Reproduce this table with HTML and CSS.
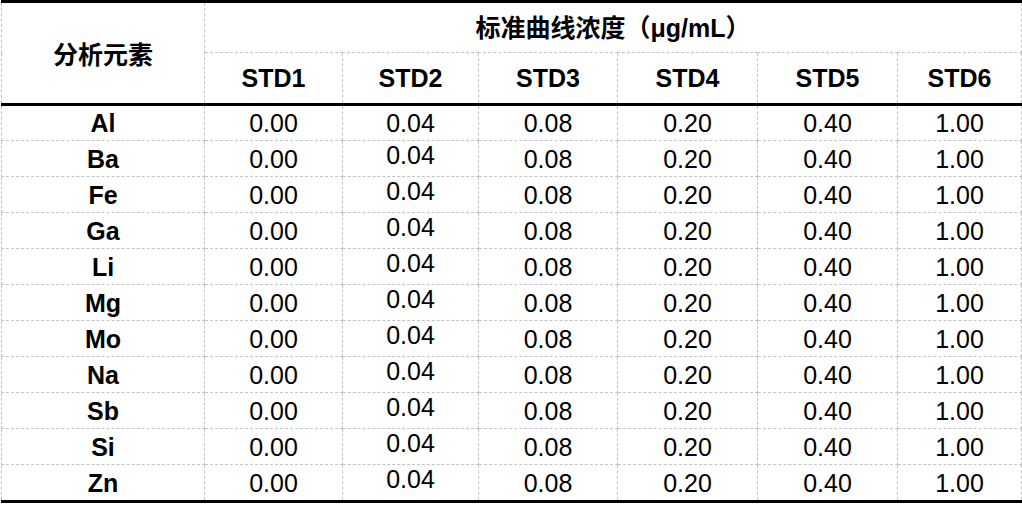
FILE: index.html
```html
<!DOCTYPE html>
<html lang="zh">
<head>
<meta charset="utf-8">
<link rel="stylesheet" href="styles.css">
</head>
<body>
<table class="grid">
  <colgroup>
    <col class="c-el">
    <col class="c1"><col class="c2"><col class="c3"><col class="c4"><col class="c5"><col class="c6">
  </colgroup>
  <thead>
    <tr class="h1">
      <th rowspan="2" class="el-head">分析元素</th>
      <th colspan="6" class="title">标准曲线浓度（μg/mL）</th>
    </tr>
    <tr class="h2">
      <th>STD1</th><th>STD2</th><th>STD3</th><th>STD4</th><th>STD5</th><th>STD6</th>
    </tr>
  </thead>
  <tbody>
    <tr><th>Al</th><td>0.00</td><td>0.04</td><td>0.08</td><td>0.20</td><td>0.40</td><td>1.00</td></tr>
    <tr><th>Ba</th><td>0.00</td><td class="hi">0.04</td><td>0.08</td><td>0.20</td><td>0.40</td><td>1.00</td></tr>
    <tr><th>Fe</th><td>0.00</td><td class="hi">0.04</td><td>0.08</td><td>0.20</td><td>0.40</td><td>1.00</td></tr>
    <tr><th>Ga</th><td>0.00</td><td class="hi">0.04</td><td>0.08</td><td>0.20</td><td>0.40</td><td>1.00</td></tr>
    <tr><th>Li</th><td>0.00</td><td class="hi">0.04</td><td>0.08</td><td>0.20</td><td>0.40</td><td>1.00</td></tr>
    <tr><th>Mg</th><td>0.00</td><td class="hi">0.04</td><td>0.08</td><td>0.20</td><td>0.40</td><td>1.00</td></tr>
    <tr><th>Mo</th><td>0.00</td><td class="hi">0.04</td><td>0.08</td><td>0.20</td><td>0.40</td><td>1.00</td></tr>
    <tr><th>Na</th><td>0.00</td><td class="hi">0.04</td><td>0.08</td><td>0.20</td><td>0.40</td><td>1.00</td></tr>
    <tr><th>Sb</th><td>0.00</td><td class="hi">0.04</td><td>0.08</td><td>0.20</td><td>0.40</td><td>1.00</td></tr>
    <tr><th>Si</th><td>0.00</td><td class="hi">0.04</td><td>0.08</td><td>0.20</td><td>0.40</td><td>1.00</td></tr>
    <tr><th>Zn</th><td>0.00</td><td class="hi">0.04</td><td>0.08</td><td>0.20</td><td>0.40</td><td>1.00</td></tr>
  </tbody>
</table>
</body>
</html>
```

FILE: styles.css
```css
html, body {
  margin: 0;
  padding: 0;
  background: #ffffff;
}

body {
  font-family: "Liberation Sans", Arial, "Noto Sans CJK SC", sans-serif;
  color: #000000;
}

.grid {
  border-collapse: collapse;
  table-layout: fixed;
  width: 1020px;
  margin-left: 1px;
  font-size: 25px;
}

.c-el { width: 203px; }
.c1 { width: 138px; }
.c2 { width: 136px; }
.c3 { width: 139px; }
.c4 { width: 140px; }
.c5 { width: 140px; }
.c6 { width: 124px; }

.grid th,
.grid td {
  border: 1px dashed #c4c4c4;
  padding: 0;
  text-align: center;
  vertical-align: middle;
  line-height: 28px;
  white-space: nowrap;
}

.grid th {
  font-weight: bold;
}

.grid td {
  font-weight: normal;
}

.grid thead tr:first-child th {
  border-top: 3px solid #000000;
}

.grid .h1 { height: 51px; }
.grid .h2 { height: 52px; }

.grid thead .h2 th,
.grid .el-head {
  border-bottom: 3px solid #000000;
}

.grid .el-head {
  font-family: "Noto Sans CJK SC", sans-serif;
  font-size: 25px;
}

.grid .title {
  font-family: "Liberation Sans", "Noto Sans CJK SC", sans-serif;
  font-size: 25px;
}

.grid tbody tr {
  height: 36px;
}

.grid tbody tr:last-child th,
.grid tbody tr:last-child td {
  border-bottom: 3px solid #000000;
}

.grid td.hi {
  padding-bottom: 7px;
}
```
